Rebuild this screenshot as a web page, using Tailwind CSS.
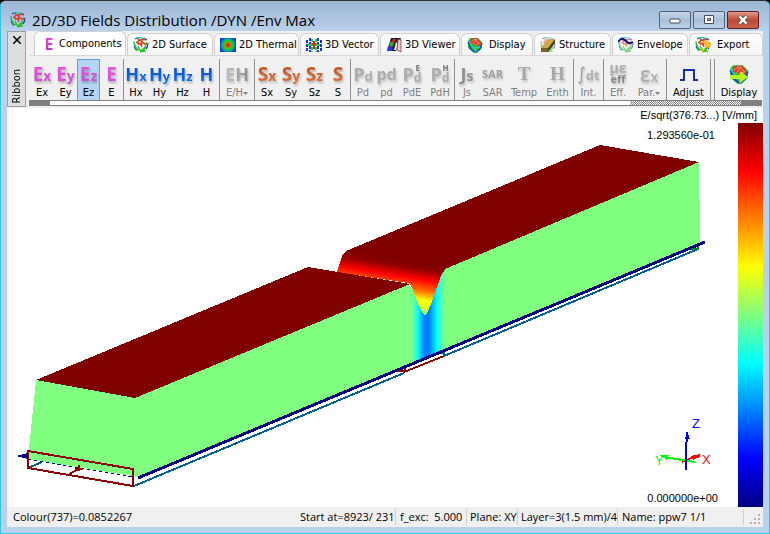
<!DOCTYPE html>
<html lang="en">
<head>
  <meta charset="UTF-8" />
  <meta name="viewport" content="width=device-width, initial-scale=1" />
  <title>2D/3D Fields Distribution</title>
  <script src="https://cdn.jsdelivr.net/npm/@tailwindcss/browser@4"></script>
</head>
<body class="h-screen overflow-hidden bg-black font-['Open_Sans','Noto_Sans',sans-serif] text-black">

  <!-- Shared icons -->
  <svg class="hidden">
    <symbol id="mesh" viewBox="0 0 16 16">
      <g fill="none" stroke-width="1.2">
        <path stroke="#2038d0" d="M2 2q2-1 4-1M15 6q0 4-2 6M1 9l2 4M11 1l3 2" />
        <path stroke="#20b8a0" d="M1 4q0 5 4 9M3 1q4-1 9 1" />
        <path stroke="#20c020" d="M1 6l3 8M4 12q4 2 8 1M7 15l6-1M14 5l-3 9M5 9l3 6M12 10l-4 4" />
        <path stroke="#e04020" d="M3 6q4-5 10-3M5 3q5 1 7 5M4 6q4 0 5 4M7 8q3-3 6-1M6 2q-2 3 0 6M10 2q-3 3-1 7" />
      </g>
    </symbol>
    <symbol id="ball" viewBox="0 0 16 16">
      <path fill="#28c030" d="M3 1h8l4 4v6l-5 5H7L1 11V4z" />
      <path fill="none" stroke="#1848d8" stroke-width="1.5" d="M1 5l3 7 4 3M15 6l-2 6-4 3" />
      <path fill="none" stroke="#30d8d0" d="M1 3l5 8 7-1M8 11l1 4" />
      <path fill="#e03828" d="M4 2l6-1 3 3 1 4-4 1-4-2-3-1z" />
      <path fill="none" stroke="#ffb090" stroke-width=".7" d="M4 5l4-3 4 4M6 7l4-5M8 8l5-2" />
    </symbol>
  </svg>

  <div class="flex h-full flex-col overflow-hidden rounded-t-md border border-x-[#32c5dd] border-t-[#333] border-b-[#32c5dd] bg-[#b9d1ea] px-[6px]">

    <!-- Title bar -->
    <header class="flex h-[30px] shrink-0 items-center gap-1 bg-linear-to-b from-[#9bb4d2] to-[#b9d1ea] pt-2 -mx-[6px] pl-[9px] pr-[10px]">
      <svg class="size-4"><use href="#mesh" /></svg>
      <h1 class="flex-1 pl-[2px] text-[15px] leading-5 whitespace-pre">2D/3D Fields Distribution /DYN /Env Max</h1>
      <div class="flex gap-[2px]">
        <button aria-label="Minimize" class="flex h-[18px] w-8 items-center justify-center rounded-xs border border-[#55647a] bg-linear-to-b from-[#c6d6e9] via-[#a9bfd9] to-[#bcd0e6]">
          <svg class="h-3 w-3" viewBox="0 0 12 12"><rect x="1" y="5" width="10" height="4" rx="1" fill="#fff" stroke="#444b5a" /></svg>
        </button>
        <button aria-label="Maximize" class="flex h-[18px] w-8 items-center justify-center rounded-xs border border-[#55647a] bg-linear-to-b from-[#c6d6e9] via-[#a9bfd9] to-[#bcd0e6]">
          <svg class="h-3 w-3" viewBox="0 0 12 12"><path fill="#fff" stroke="#444b5a" fill-rule="evenodd" d="M1.500 1.500h9v8h-9zM4.500 4.500h3v2h-3z" /></svg>
        </button>
        <button aria-label="Close" class="flex h-[18px] w-8 items-center justify-center rounded-xs border border-[#5b1f22] bg-linear-to-b from-[#dc9a8c] via-[#bd4a36] to-[#c8614c]">
          <svg class="h-3 w-3" viewBox="0 0 12 12"><path stroke="#503038" stroke-width="4" d="M2.500 2.500l7 7M9.500 2.500l-7 7" /><path stroke="#fff" stroke-width="2.500" d="M2.500 2.500l7 7M9.500 2.500l-7 7" /></svg>
        </button>
      </div>
    </header>

    <!-- Ribbon -->
    <div class="flex h-[77px] shrink-0 bg-[#f0f0f0] font-['DejaVu_Sans_Condensed','DejaVu_Sans',sans-serif] text-[11px] leading-3">
      <aside class="flex h-[76px] w-[19px] shrink-0 flex-col items-center justify-between border border-[#a0a0a0] bg-[#dedede] pt-1 pb-[2px]">
        <button aria-label="Close ribbon">
          <svg class="size-2" viewBox="0 0 8 8"><path stroke="#000" stroke-width="1.500" d="M0 0l8 8M8 0l-8 8" /></svg>
        </button>
        <span class="rotate-180 [writing-mode:vertical-rl]">Ribbon</span>
      </aside>

      <div class="flex min-w-0 flex-1 flex-col pl-1">
        <!-- Tabs -->
        <nav class="flex h-6 items-end gap-px pl-1 whitespace-nowrap">
          <button class="flex h-6 w-[92px] items-center gap-1 rounded-t-md border border-b-0 border-[#d0d0d0] bg-white pl-2">
            <span class="w-3 bg-linear-to-b from-[#f050d8] to-[#c030b8] bg-clip-text font-['Open_Sans',sans-serif] text-[16px] leading-5 font-bold text-transparent">E</span>Components
          </button>
          <button class="flex h-[22px] w-[86px] items-center gap-[3px] rounded-t-md border border-b-0 border-[#d0d0d0] bg-linear-to-b from-white to-[#f4f4f4] pl-[5px]">
            <svg class="size-4"><use href="#mesh" /></svg>2D Surface
          </button>
          <button class="flex h-[22px] w-[85px] items-center gap-[3px] rounded-t-md border border-b-0 border-[#d0d0d0] bg-linear-to-b from-white to-[#f4f4f4] pl-[5px]">
            <span class="h-[14px] w-4 bg-[radial-gradient(circle,#e02010_10%,#a0a000_28%,#10d030_44%,#00a0a0_60%,#1040e0_75%)]"></span>2D Thermal
          </button>
          <button class="flex h-[22px] w-[79px] items-center gap-[3px] rounded-t-md border border-b-0 border-[#d0d0d0] bg-linear-to-b from-white to-[#f4f4f4] pl-[5px]">
            <svg class="size-4" viewBox="0 0 16 16" fill="none">
              <path stroke="#1830e0" stroke-width="2" stroke-dasharray="3 1" d="M1 3v11M4 1v14M12 1v14M15 3v11" />
              <path stroke="#20d050" stroke-width="2" stroke-dasharray="3 1" d="M6 2v13M10 2v13M2 8h3M11 8h3" />
              <path stroke="#f02010" stroke-width="2" d="M8 4v8M6 7h4" />
            </svg>3D Vector
          </button>
          <button class="flex h-[22px] w-[80px] items-center gap-[3px] rounded-t-md border border-b-0 border-[#d0d0d0] bg-linear-to-b from-white to-[#f4f4f4] pl-[5px]">
            <svg class="size-4" viewBox="0 0 16 16">
              <path fill="#202020" d="M5 1h10l-5 13H1z" />
              <path fill="#e02818" d="M7 2h3L6 10H4z" /><path fill="#20b030" d="M5 4l3 3-2 3-3-2z" /><path fill="#2040e0" d="M2 9l5 2-1 3H1z" /><path fill="#f0f0f0" d="M10 5l2 2-2 6H8z" /><path fill="#f0c8c8" stroke="#703030" stroke-width=".7" d="M12 2l3 1v12l-4-2z" />
            </svg>3D Viewer
          </button>
          <button class="flex h-[22px] w-[72px] items-center gap-[6px] rounded-t-md border border-b-0 border-[#d0d0d0] bg-linear-to-b from-white to-[#f4f4f4] pl-[5px]">
            <svg class="size-4"><use href="#ball" /></svg>Display
          </button>
          <button class="flex h-[22px] w-[77px] items-center gap-[3px] rounded-t-md border border-b-0 border-[#d0d0d0] bg-linear-to-b from-white to-[#f4f4f4] pl-[5px]">
            <svg class="size-4" viewBox="0 0 16 16"><use href="#mesh" width="16" height="16" opacity=".5" /><path fill="#d0a850" d="M7 3l8-1-7 9H1z" /><path fill="#806020" d="M1 11h7v4H1z" /><path fill="#503c14" d="M8 11l7-9v4l-7 9z" /></svg>Structure
          </button>
          <button class="flex h-[22px] w-[76px] items-center gap-[3px] rounded-t-md border border-b-0 border-[#d0d0d0] bg-linear-to-b from-white to-[#f4f4f4] pl-[5px]">
            <svg class="size-4" viewBox="0 0 16 16"><use href="#mesh" width="16" height="16" opacity=".6" /><path fill="none" stroke="#101880" stroke-width="2" d="M0 5q3-4 5-3t4 3 6 0" /></svg>Envelope
          </button>
          <button class="flex h-[22px] min-w-0 flex-1 items-center gap-[6px] rounded-t-md border border-b-0 border-[#d0d0d0] bg-linear-to-b from-white to-[#f4f4f4] pl-[5px]">
            <svg class="size-4" viewBox="0 0 16 16"><use href="#mesh" width="16" height="16" /><path fill="#f8b820" d="M6 5q6-3 8 1l2-1-1 6-6-1 2-2q-2-2-5-3zM6 9l4 5-3 1z" /></svg>Export
          </button>
        </nav>

        <!-- Commands -->
        <div class="flex h-[45px] border-t border-[#d8d8d8] pt-[3px] text-center whitespace-nowrap">
          <div class="flex border-r border-[#909090]">
            <button class="w-6 pt-px"><span class="block h-[25px] bg-linear-to-b from-[#f850e0] to-[#c050c8] bg-clip-text font-['Open_Sans',sans-serif] text-[19px] leading-6 font-bold text-transparent drop-shadow-[1px_2px_1px_#0004]">E<span class="text-[14px]">x</span></span>Ex</button>
            <button class="w-[23px] pt-px"><span class="block h-[25px] bg-linear-to-b from-[#f850e0] to-[#c050c8] bg-clip-text font-['Open_Sans',sans-serif] text-[19px] leading-6 font-bold text-transparent drop-shadow-[1px_2px_1px_#0004]">E<span class="text-[14px]">y</span></span>Ey</button>
            <button class="w-[23px] border border-b-0 border-[#60a0e0] bg-[#b4d4f4]"><span class="block h-[25px] bg-linear-to-b from-[#f850e0] to-[#c050c8] bg-clip-text font-['Open_Sans',sans-serif] text-[19px] leading-6 font-bold text-transparent drop-shadow-[1px_2px_1px_#0004]">E<span class="text-[14px]">z</span></span>Ez</button>
            <button class="w-[23px] pt-px"><span class="block h-[25px] bg-linear-to-b from-[#f850e0] to-[#c050c8] bg-clip-text font-['Open_Sans',sans-serif] text-[19px] leading-6 font-bold text-transparent drop-shadow-[1px_2px_1px_#0004]">E</span>E</button>
          </div>
          <div class="flex border-r border-[#909090] pt-px">
            <button class="w-6"><span class="block h-[25px] bg-linear-to-b from-[#0848b8] to-[#1078ff] bg-clip-text font-['Open_Sans',sans-serif] text-[18px] leading-6 font-bold text-transparent drop-shadow-[1px_2px_1px_#0004]">H<span class="text-[13px]">x</span></span>Hx</button>
            <button class="w-[23px]"><span class="block h-[25px] bg-linear-to-b from-[#0848b8] to-[#1078ff] bg-clip-text font-['Open_Sans',sans-serif] text-[18px] leading-6 font-bold text-transparent drop-shadow-[1px_2px_1px_#0004]">H<span class="text-[13px]">y</span></span>Hy</button>
            <button class="w-[23px]"><span class="block h-[25px] bg-linear-to-b from-[#0848b8] to-[#1078ff] bg-clip-text font-['Open_Sans',sans-serif] text-[18px] leading-6 font-bold text-transparent drop-shadow-[1px_2px_1px_#0004]">H<span class="text-[13px]">z</span></span>Hz</button>
            <button class="w-[25px]"><span class="block h-[25px] bg-linear-to-b from-[#0848b8] to-[#1078ff] bg-clip-text font-['Open_Sans',sans-serif] text-[18px] leading-6 font-bold text-transparent drop-shadow-[1px_2px_1px_#0004]">H</span>H</button>
          </div>
          <div class="flex border-r border-[#909090] pt-px text-[#808080]">
            <button class="w-[34px]"><span class="block h-[25px] bg-linear-to-r from-[#d0d0d0] to-[#808080] bg-clip-text font-['Open_Sans',sans-serif] text-[18px] leading-6 font-bold text-transparent drop-shadow-[1px_2px_1px_#0003]">EH</span>E/H<svg class="inline h-1 w-[5px]" viewBox="0 0 5 4"><path fill="#808080" d="M0 1h5L2.500 4z" /></svg></button>
          </div>
          <div class="flex border-r border-[#909090] pt-px">
            <button class="w-6"><span class="block h-[25px] bg-linear-to-b from-[#b84820] to-[#e87838] bg-clip-text font-['Open_Sans',sans-serif] text-[19px] leading-6 font-bold text-transparent drop-shadow-[1px_2px_1px_#0004]">S<span class="text-[14px]">x</span></span>Sx</button>
            <button class="w-6"><span class="block h-[25px] bg-linear-to-b from-[#b84820] to-[#e87838] bg-clip-text font-['Open_Sans',sans-serif] text-[19px] leading-6 font-bold text-transparent drop-shadow-[1px_2px_1px_#0004]">S<span class="text-[14px]">y</span></span>Sy</button>
            <button class="w-[23px]"><span class="block h-[25px] bg-linear-to-b from-[#b84820] to-[#e87838] bg-clip-text font-['Open_Sans',sans-serif] text-[19px] leading-6 font-bold text-transparent drop-shadow-[1px_2px_1px_#0004]">S<span class="text-[14px]">z</span></span>Sz</button>
            <button class="w-6"><span class="block h-[25px] bg-linear-to-b from-[#b84820] to-[#e87838] bg-clip-text font-['Open_Sans',sans-serif] text-[19px] leading-6 font-bold text-transparent drop-shadow-[1px_2px_1px_#0004]">S</span>S</button>
          </div>
          <div class="flex border-r border-[#909090] pt-px text-[#808080]">
            <button class="w-6"><span class="block h-[25px] font-['Open_Sans',sans-serif] text-[18px] leading-6 font-bold text-[#adadad] drop-shadow-[1px_2px_1px_#0003]">P<span class="text-[13px]">d</span></span>Pd</button>
            <button class="w-[23px]"><span class="block h-[25px] font-['Open_Sans',sans-serif] text-[16px] leading-6 font-bold text-[#adadad] drop-shadow-[1px_2px_1px_#0003]">pd</span>pd</button>
            <button class="w-7"><span class="flex h-[25px] justify-center font-['Open_Sans',sans-serif] text-[18px] leading-6 font-bold text-[#adadad] drop-shadow-[1px_2px_1px_#0003]">P<span class="flex flex-col pt-[2px] text-[12px] leading-3"><span class="text-[8px] leading-2 text-[#777]">E</span>d</span></span>PdE</button>
            <button class="w-7"><span class="flex h-[25px] justify-center font-['Open_Sans',sans-serif] text-[18px] leading-6 font-bold text-[#adadad] drop-shadow-[1px_2px_1px_#0003]">P<span class="flex flex-col pt-[2px] text-[12px] leading-3"><span class="text-[8px] leading-2 text-[#777]">H</span>d</span></span>PdH</button>
          </div>
          <div class="flex border-r border-[#909090] pt-px text-[#808080]">
            <button class="w-6"><span class="block h-[25px] font-['Open_Sans',sans-serif] text-[18px] leading-6 font-bold text-[#909090] drop-shadow-[1px_2px_1px_#0003]">J<span class="text-[14px]">s</span></span>Js</button>
            <button class="w-[27px]"><span class="block h-[25px] font-['Open_Sans',sans-serif] text-[11px] leading-6 font-bold text-[#a0a0a0] drop-shadow-[1px_2px_1px_#0003]">SAR</span>SAR</button>
            <button class="w-9"><span class="block h-[25px] font-['Liberation_Serif',serif] text-[19px] leading-6 font-bold text-[#a8a8a8] drop-shadow-[1px_2px_1px_#0003]">T</span>Temp</button>
            <button class="w-[31px]"><span class="block h-[25px] font-['Liberation_Serif',serif] text-[19px] leading-6 font-bold text-[#a8a8a8] drop-shadow-[1px_2px_1px_#0003]">H</span>Enth</button>
          </div>
          <div class="flex border-r border-[#909090] pt-px text-[#808080]">
            <button class="w-[29px]"><span class="block h-[25px] text-[18px] leading-6 text-[#999] drop-shadow-[1px_2px_1px_#0003]">∫<span class="font-['Open_Sans',sans-serif] text-[13px] font-bold text-[#b0b0b0]">dt</span></span>Int.</button>
          </div>
          <div class="flex border-r border-[#909090] pt-px text-[#808080]">
            <button class="w-[28px]"><span class="flex h-[25px] flex-col font-['Open_Sans',sans-serif] text-[14px] leading-[11px] font-bold text-[#adadad] drop-shadow-[1px_2px_1px_#0003]"><span>με</span><span class="text-[11px] text-[#888]">eff</span></span>Eff.</button>
            <button class="w-[34px]"><span class="block h-[25px] font-['Open_Sans',sans-serif] text-[21px] leading-6 font-semibold text-[#adadad] drop-shadow-[1px_2px_1px_#0003]">ε<span class="text-[14px]">x</span></span>Par.<svg class="inline h-1 w-[5px]" viewBox="0 0 5 4"><path fill="#808080" d="M0 1h5L2.500 4z" /></svg></button>
          </div>
          <div class="flex border-r border-[#909090] pt-px">
            <button class="w-[43px]"><svg class="mx-auto h-[25px] w-5" viewBox="0 0 20 25"><path fill="none" stroke="#1030b0" stroke-width="2" d="M1 18h4V8h10v10h4" /></svg>Adjust</button>
          </div>
          <div class="ml-[3px] flex min-w-0 flex-1 border-l border-[#909090] pt-px">
            <button class="w-full"><svg class="mx-auto h-[25px] w-5" viewBox="0 0 20 25"><use href="#ball" y="2" width="20" height="20" /><path fill="#b8f020" d="M1 13h10V9l8 6-8 6v-4H1z" /></svg>Display</button>
          </div>
        </div>

        <!-- Scroll track -->
        <div class="mr-px flex h-[6px] border-y border-[#808080] bg-white -ml-px">
          <div class="w-[21px] bg-[#808080]"></div>
          <div class="flex-1"></div>
          <div class="w-[111px] bg-[conic-gradient(#808080_25%,#fff_0_50%,#808080_0_75%,#fff_0)] bg-size-[2px_2px]"></div>
          <div class="w-[21px] bg-[#808080]"></div>
        </div>
      </div>
    </div>

    <!-- Field plot -->
    <main class="relative flex min-h-0 flex-1 bg-white font-['Liberation_Sans',Arial,sans-serif] text-[11px] leading-3">
      <svg class="h-full min-w-0 flex-1" viewBox="7 108 731 399" shape-rendering="crispEdges">
        <defs>
          <linearGradient id="slope" gradientUnits="userSpaceOnUse" x1="425" y1="264" x2="417" y2="313">
            <stop offset="0" stop-color="#800000" /><stop offset=".12" stop-color="#900000" /><stop offset=".32" stop-color="#f00" />
            <stop offset=".54" stop-color="#ff7000" /><stop offset=".72" stop-color="#ff0" /><stop offset=".86" stop-color="#e8ff18" /><stop offset="1" stop-color="#80ff80" />
          </linearGradient>
          <linearGradient id="dip" gradientUnits="userSpaceOnUse" x1="408" y1="0" x2="446" y2="0">
            <stop offset="0" stop-color="#80ff80" /><stop offset=".12" stop-color="#70ff90" /><stop offset=".27" stop-color="#00ffff" />
            <stop offset=".42" stop-color="#0080ff" /><stop offset=".56" stop-color="#0080ff" /><stop offset=".76" stop-color="#00ffff" />
            <stop offset=".9" stop-color="#60ffa0" /><stop offset="1" stop-color="#80ff80" />
          </linearGradient>
        </defs>

        <path fill="#80ff80" d="M36 380L135 397 408 284 425 315 445 269 699 162V200L700 201V243L138 477 28 459z" />
        <path fill="url(#dip)" d="M408 284L425 305 445 269V352L408 367z" />
        <path fill="#800000" d="M346 251L600 145 699 162 445 269z" />
        <path fill="url(#slope)" d="M346 251L445 269 441 276 437 287 432 302 427 313 425 315 423 314 419 306 415 296 412 288 410 284 408 283 337 272 340 262 343 254z" />
        <path fill="#800000" d="M36 380L308 267 410 284 135 398z" />

        <!-- substrate edges -->
        <g fill="none">
          <path stroke="#006090" stroke-width="2" d="M134 486L404 373M444 356L698 249V243M28 468L42 462M438 353h6v4" />
          <path stroke="#000080" stroke-width="3" d="M138 478L705 242" />
          <path stroke="#000080" stroke-dasharray="3 3" d="M28 459L133 477" />
          <path stroke="#900000" stroke-width="2" d="M404 372L444 356M397 371h8v-3M28 451L133 469V486L28 468zM69 474L79 469M75 469h8M79 465v6" />
          <path stroke="#008020" stroke-width="2" d="M691 249h6" />
        </g>
        <path fill="#000080" d="M16 456L28 453V459z" />

        <!-- axes -->
        <g fill="none" stroke-width="2">
          <path stroke="#f00" d="M682 462L696 456" /><path stroke="#0f0" d="M695 462L664 457" /><path stroke="#00f" d="M686 470V450L687 435" />
        </g>
        <path fill="#f00" d="M691 456L700 454V457L693 460z" />
        <path fill="#0f0" d="M659 455L669 455 667 460z" />
        <path fill="#00f" d="M687 430L690 439H685z" />
        <g font-size="13">
          <text x="692" y="428" fill="#00f">Z</text><text x="655" y="465" fill="#0f0">Y</text><text x="702" y="464" fill="#f00">X</text>
        </g>
      </svg>
      <div class="mt-[15px] w-[25px] shrink-0 bg-[linear-gradient(#800000,#f00_12.5%,#ff0_37.5%,#0ff_62.5%,#00f_87.5%,#000080)]"></div>
      <span class="absolute top-px right-[6px]">E/sqrt(376.73...) [V/mm]</span>
      <span class="absolute top-[21px] right-12">1.293560e-01</span>
      <span class="absolute right-[45px] bottom-[3px]">0.000000e+00</span>
    </main>

    <!-- Status bar -->
    <footer class="mb-[6px] flex h-5 shrink-0 items-center bg-[#f0f0f0] pl-[6px] text-[11px] leading-4 whitespace-pre">
      <span class="flex-1">Colour(737)=0.0852267</span>
      <span class="w-[96px] border-r border-[#d0d0d0]">Start at=8923/ 231</span>
      <span class="w-[71px] border-r border-[#d0d0d0] pl-1">f_exc:  5.000</span>
      <span class="w-[51px] border-r border-[#d0d0d0] pl-[3px]">Plane: XY</span>
      <span class="w-[100px] border-r border-[#d0d0d0] pl-[3px]">Layer=3(1.5 mm)/4</span>
      <span class="w-[126px] border-r border-[#d0d0d0] pl-1">Name: ppw7 1/1</span>
      <svg class="ml-1 mt-1 h-3 w-[15px]" viewBox="0 0 15 12"><path fill="#b4b4b4" d="M10 1h2v2h-2zM6 5h2v2H6zM10 5h2v2h-2zM2 9h2v2H2zM6 9h2v2H6zM10 9h2v2h-2z" /></svg>
    </footer>
  </div>
</body>
</html>
